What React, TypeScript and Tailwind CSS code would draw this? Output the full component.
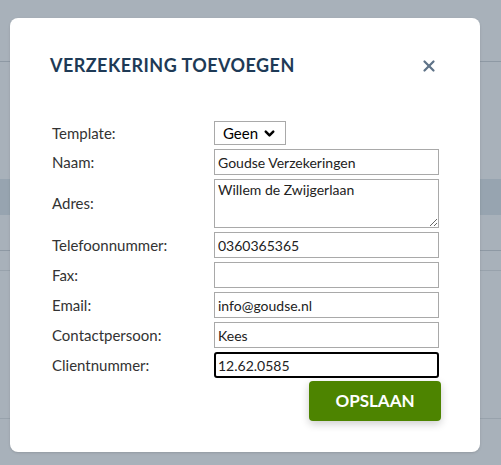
import { X, ChevronDown } from 'lucide-react';

const FIELDS = [
  { label: 'Telefoonnummer:', value: '0360365365' },
  { label: 'Fax:', value: '' },
  { label: 'Email:', value: 'info@goudse.nl' },
  { label: 'Contactpersoon:', value: 'Kees' },
];

const inputCls =
  'h-[26px] w-full border border-[#a9a9a9] bg-white px-[3px] text-[14px] text-[#222] outline-none';

export default function App() {
  return (
    <div
      className="relative h-[465px] w-[501px] overflow-hidden bg-[#a8b1ba]"
      style={{ fontFamily: 'Lato, "Open Sans", sans-serif' }}
    >
      {/* Page behind the overlay */}
      <div className="h-[62px] border-b border-[#8e99a4]" />
      <div className="h-[117px]" />
      <div className="h-[36px] bg-[#97a4b0]" />
      <div className="h-[36px] border-b border-[#8e99a4]" />
      <div className="h-[20px] border-b border-[#98a2ac]" />
      <div className="h-[148px] border-b border-[#98a2ac]" />

      {/* Modal */}
      <div className="absolute left-[10px] top-[18px] w-[470px] rounded-lg bg-white pb-[31px] pl-[40px] pr-[40px] pt-[34px] shadow-sm">
        <div className="flex items-center justify-between">
          <h2 className="text-[18px] font-bold uppercase tracking-[0.025em] text-[#1e3a56]">
            Verzekering toevoegen
          </h2>
          <button className="mr-[2px] text-[#5f7388]">
            <X className="h-[18px] w-[18px]" strokeWidth={3} />
          </button>
        </div>

        <div className="mt-[42px] grid grid-cols-[162px_225px] gap-y-[4px] pl-[2px] text-[15px] text-[#333]">
          <label className="flex items-center">Template:</label>
          <div>
            <div className="flex h-[24px] w-[72px] items-center justify-between border border-[#a9a9a9] px-[8px] text-[15px] text-black">
              <span>Geen</span>
              <ChevronDown className="h-[15px] w-[15px]" strokeWidth={4} />
            </div>
          </div>

          <label className="flex items-center">Naam:</label>
          <input className={inputCls} defaultValue="Goudse Verzekeringen" />

          <label className="flex items-center">Adres:</label>
          <textarea
            className="h-[49px] w-full border border-[#a9a9a9] bg-white px-[3px] text-[14px] leading-[20px] text-[#222] outline-none"
            defaultValue="Willem de Zwijgerlaan"
          />

          {FIELDS.map((f) => (
            <div key={f.label} className="contents">
              <label className="flex items-center">{f.label}</label>
              <input className={inputCls} defaultValue={f.value} />
            </div>
          ))}

          <label className="flex items-center">Clientnummer:</label>
          <input
            className="h-[26px] w-full rounded-[3px] border-2 border-black bg-white px-[2px] text-[14px] text-[#222] outline-none"
            defaultValue="12.62.0585"
          />
        </div>

        <div className="mt-[3px] flex justify-end">
          <button className="mr-[-1px] h-[40px] w-[132px] rounded-[4px] bg-[#4d8400] text-[17px] font-bold text-white shadow-[0_3px_8px_rgba(0,0,0,0.2)]">
            OPSLAAN
          </button>
        </div>
      </div>
    </div>
  );
}
